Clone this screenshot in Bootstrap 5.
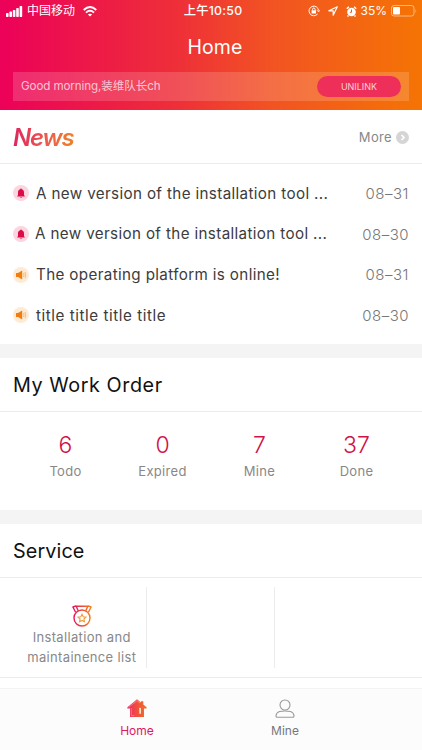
<!DOCTYPE html>
<html lang="en">
<head>
<meta charset="utf-8">
<meta name="viewport" content="width=device-width, initial-scale=1">
<title>Home</title>
<link href="https://cdn.jsdelivr.net/npm/bootstrap@5.3.0/dist/css/bootstrap.min.css" rel="stylesheet">
<style>
body{font-family:Inter,"Noto Sans CJK SC",sans-serif;background:#f4f4f4;color:#3c3c3c;height:750px;overflow:hidden;line-height:1}
svg{display:block;flex:none}
.hero{height:110px;background:linear-gradient(90deg,#ec0159 0%,#ee2f38 42%,#f25422 65%,#f57404 100%)}
.status{height:22px;padding:0 5px 0 6px;font-size:12px;display:grid;grid-template-columns:1fr auto 1fr}
.clock{font-size:12.3px;font-weight:500;letter-spacing:.25px;padding-left:3px}
.page-title{height:50px;font-size:19.5px;letter-spacing:.1px;padding:1px 0 0 8px}
.greeting{height:29px;margin:0 13px;padding:0 8px;background:rgba(255,255,255,.16);font-size:11.6px;color:rgba(255,255,255,.72)}
.greeting span{letter-spacing:-.1px;padding-top:1px}
.unilink{width:84px;height:21px;background:#ee2f59;font-size:9px;color:#fbd0d8;border-radius:11px}
.news-head{height:54px;padding:0 13px;border-bottom:1px solid #ececec}
.news-logo{font-style:italic;font-weight:600;font-size:24px;letter-spacing:-1.2px;background:linear-gradient(90deg,#e0245e,#ea5a50 50%,#ed8424);-webkit-background-clip:text;color:transparent;line-height:28px;padding:2px 3px 0 0}
.more{font-size:13px;color:#888;letter-spacing:.35px;padding-top:1px}
.news-list{height:180px;padding:9px 13px 0}
.news-row{height:40.7px;font-size:15.2px;letter-spacing:.36px}
.news-row svg{margin-right:7px}
.news-row.shifted svg{margin-right:6px}
.news-row.brief{letter-spacing:.55px}
.news-date{color:#777;letter-spacing:.5px;font-weight:300;font-size:15px}
.panel{margin-top:14px}
.section-title{height:54px;font-size:19.8px;color:#111;letter-spacing:.55px;padding:2px 0 0 13px;border-bottom:1px solid #ececec}
.section-title.narrow{letter-spacing:.1px}
.stats{height:98px;padding:22px 17px 0;font-size:13px;color:#888;letter-spacing:.3px}
.stat-value{font-size:23px;color:#cf1248;letter-spacing:0;height:24px;margin-bottom:7px;font-weight:300}
.services{height:100px;padding:9px 18px;border-bottom:1px solid #ececec;font-size:13px;color:#888;line-height:19.5px;letter-spacing:.34px}
.cell-line{border-right:1px solid #ececec;width:128.5px}
.medal{margin-top:2px;margin-bottom:1px}
.spacer{height:10px}
.tabs{height:63px;background:#fcfcfc;border-top:1px solid #f3f3f3;font-size:12px;padding:0 63px}
.tab-on{color:#dd1766}
.tab-off{color:#777}
.tab-icon{height:20px;margin:9px 0 7px}
</style>
<script src="https://cdn.jsdelivr.net/npm/bootstrap@5.3.0/dist/js/bootstrap.bundle.min.js"></script>
</head>
<body>
<svg width="0" height="0" class="position-absolute"><defs>
<linearGradient id="brand" gradientUnits="userSpaceOnUse" x1="0" x2="20" y1="0" y2="0"><stop stop-color="#e40b66"/><stop offset="1" stop-color="#f18a15"/></linearGradient>
<linearGradient id="brandHome" gradientUnits="userSpaceOnUse" x1="0" x2="20" y1="0" y2="0"><stop stop-color="#ee2860"/><stop offset="1" stop-color="#f17422"/></linearGradient>
<symbol id="bell" viewBox="0 0 16 16"><circle cx="8" cy="8" r="8" fill="#fbd5df"/><path d="M8 3.400c.5 0 .8.3.8.8 1.600.4 2.200 1.600 2.200 3.200v2.900l.8.6v.7H4.200v-.7l.8-.6V7.400c0-1.600.6-2.800 2.200-3.200 0-.5.3-.8.8-.8zM6.800 12h2.400c0 .8-2.400.8-2.400 0z" fill="#dc0c48"/></symbol>
<symbol id="horn" viewBox="0 0 16 16"><circle cx="8" cy="8" r="8" fill="#fdebd5"/><path d="M3 6h2l4.200-2.500v9L5 10H3z" fill="#f27c0c"/><path d="M10.500 6q1 2 0 4M12 5q1.500 3 0 6" fill="none" stroke="#f4b878" stroke-width=".9"/></symbol>
</defs></svg>
<header class="hero text-white">
  <div class="status align-items-center">
    <div class="d-flex align-items-center">
      <svg width="17" height="11" viewBox="0 0 17 11" fill="#fff"><rect y="7" width="2.600" height="4" rx=".7"/><rect x="3.400" y="5.500" width="2.600" height="5.500" rx=".7"/><rect x="6.800" y="4" width="2.600" height="7" rx=".7"/><rect x="10.200" y="2" width="2.600" height="9" rx=".7"/><rect x="13.600" width="2.600" height="11" rx=".7"/></svg>
      <span class="ms-1">中国移动</span>
      <svg class="ms-2" width="14" height="11" viewBox="0 0 14 11" fill="none" stroke="#fff" stroke-width="1.900"><path d="M.7 4Q7-1.800 13.300 4M3 6.600q4-3.500 8 0"/><path d="M7 10.500 4.900 8.400q2.100-1.500 4.200 0z" fill="#fff" stroke="none"/></svg>
    </div>
    <div class="clock">上午10:50</div>
    <div class="d-flex align-items-center justify-content-end">
      <svg width="12" height="12" viewBox="0 0 12 12" fill="none" stroke="#fff"><path d="M9.600 8.900A4.800 4.800 0 1 1 10.600 5.500"/><path d="m9 5.200 1.600 1.600L12 5.200"/><path d="M4.500 5.500V4.300c0-1.700 2.600-1.700 2.600 0v1.200"/><rect x="3.600" y="5.300" width="4.400" height="3.200" fill="#fff" stroke="none"/></svg>
      <svg class="ms-2" width="10" height="10" viewBox="0 0 10 10" fill="none" stroke="#fff" stroke-width="1.200" stroke-linejoin="round"><path d="M9.300.8.800 4.800h4.400v4.400z"/></svg>
      <svg class="ms-2" width="11" height="11" viewBox="0 0 11 11"><circle cx="5.500" cy="6" r="4.300" fill="#fff"/><path d="M.8 2.800 2.900.8M10.200 2.800 8.100.8M2.500 9.500l-1 1M8.500 9.500l1 1" stroke="#fff" stroke-width="1.500"/><path d="M5.500 3.500V6.300H3.800" fill="none" stroke="#f25422"/></svg>
      <span class="ms-1">35%</span>
      <svg class="ms-1" width="26" height="12" viewBox="0 0 26 12"><rect x=".5" y=".5" width="22.500" height="10.500" rx="2.500" fill="none" stroke="#fff" stroke-opacity=".5"/><rect x="2" y="2" width="7" height="7.500" rx="1" fill="#fff"/><path d="M24.500 4q1.500 2 0 4z" fill="#fff" fill-opacity=".5"/></svg>
    </div>
  </div>
  <div class="page-title d-flex align-items-center justify-content-center">Home</div>
  <div class="greeting d-flex align-items-center justify-content-between"><span>Good morning,装维队长ch</span><button class="unilink btn p-0 border-0">UNILINK</button></div>
</header>
<main>
  <section class="bg-white">
    <div class="news-head d-flex align-items-center justify-content-between"><span class="news-logo">News</span>
      <a class="more d-flex align-items-center gap-1 text-decoration-none">More <svg width="13" height="13" viewBox="0 0 13 13"><circle cx="6.500" cy="6.500" r="6.500" fill="#d5d5d5"/><path d="m5.500 4 2.500 2.500L5.500 9" fill="none" stroke="#fff" stroke-width="1.700"/></svg></a></div>
    <div class="news-list">
      <div class="news-row d-flex align-items-center"><svg width="16" height="16"><use href="#bell"/></svg><span>A new version of the installation tool ...</span><span class="news-date ms-auto">08–31</span></div>
      <div class="news-row shifted d-flex align-items-center"><svg width="16" height="16"><use href="#bell"/></svg><span>A new version of the installation tool ...</span><span class="news-date ms-auto">08–30</span></div>
      <div class="news-row d-flex align-items-center"><svg width="16" height="16"><use href="#horn"/></svg><span>The operating platform is online!</span><span class="news-date ms-auto">08–31</span></div>
      <div class="news-row brief d-flex align-items-center"><svg width="16" height="16"><use href="#horn"/></svg><span>title title title title</span><span class="news-date ms-auto">08–30</span></div>
    </div>
  </section>
  <section class="bg-white panel">
    <h2 class="section-title d-flex align-items-center m-0 fw-normal">My Work Order</h2>
    <div class="stats d-flex text-center">
      <div class="col-3"><div class="stat-value">6</div>Todo</div><div class="col-3"><div class="stat-value">0</div>Expired</div><div class="col-3"><div class="stat-value">7</div>Mine</div><div class="col-3"><div class="stat-value">37</div>Done</div>
    </div>
  </section>
  <section class="bg-white panel">
    <h2 class="section-title narrow d-flex align-items-center m-0 fw-normal">Service</h2>
    <div class="services d-flex">
      <div class="cell-line d-flex flex-column align-items-center text-center pt-3"><svg class="medal" width="20" height="22" viewBox="0 0 20 22" fill="none" stroke="url(#brand)" stroke-width="1.400"><circle cx="10" cy="13" r="8"/><path d="M3.600 7.300.9 2 4 .9l2.200 4.800M16.400 7.300 19.100 2 16 .9l-2.200 4.800M4 1.300h12" stroke-linejoin="round"/><path d="m10 9.300 1.200 2.500 2.700.3-2 1.900.6 2.700-2.500-1.300-2.500 1.300.6-2.700-2-1.900 2.700-.3z" stroke="#f09a3a" stroke-width="1.100"/></svg><span>Installation and<br>maintainence list</span></div>
      <div class="cell-line"></div>
    </div>
  </section>
</main>
<div class="bg-white spacer"></div>
<nav class="tabs d-flex">
  <div class="col-6 tab-on d-flex flex-column align-items-center"><svg class="tab-icon" width="20" height="20" viewBox="0 0 20 20"><path d="M10 1.200 14 4.400V3.200h2.300v3.200L19.600 9.300v1.200H17V19H3V10.500H.4V9.300z" fill="url(#brandHome)"/><path d="M1.600 9.300 10 2.700l3 2.400M4.300 10v7.700h3" fill="none" stroke="#fff" stroke-opacity=".45" stroke-width=".7"/><rect x="12.300" y="9.800" width="1.700" height="6" rx=".5" fill="#ffe1c5"/></svg>Home</div>
  <div class="col-6 tab-off d-flex flex-column align-items-center"><svg class="tab-icon" width="20" height="20" viewBox="0 0 20 20" fill="none" stroke="#999" stroke-width="1.100"><circle cx="10" cy="7" r="5"/><path d="M4.500 13.500Q10 12.500 15.500 13.500q3 1 3.500 4 .2 1.800-1.500 1.800H2.500Q.8 19.300 1 17.500 1.500 14.500 4.500 13.500z"/></svg>Mine</div>
</nav>
</body>
</html>
